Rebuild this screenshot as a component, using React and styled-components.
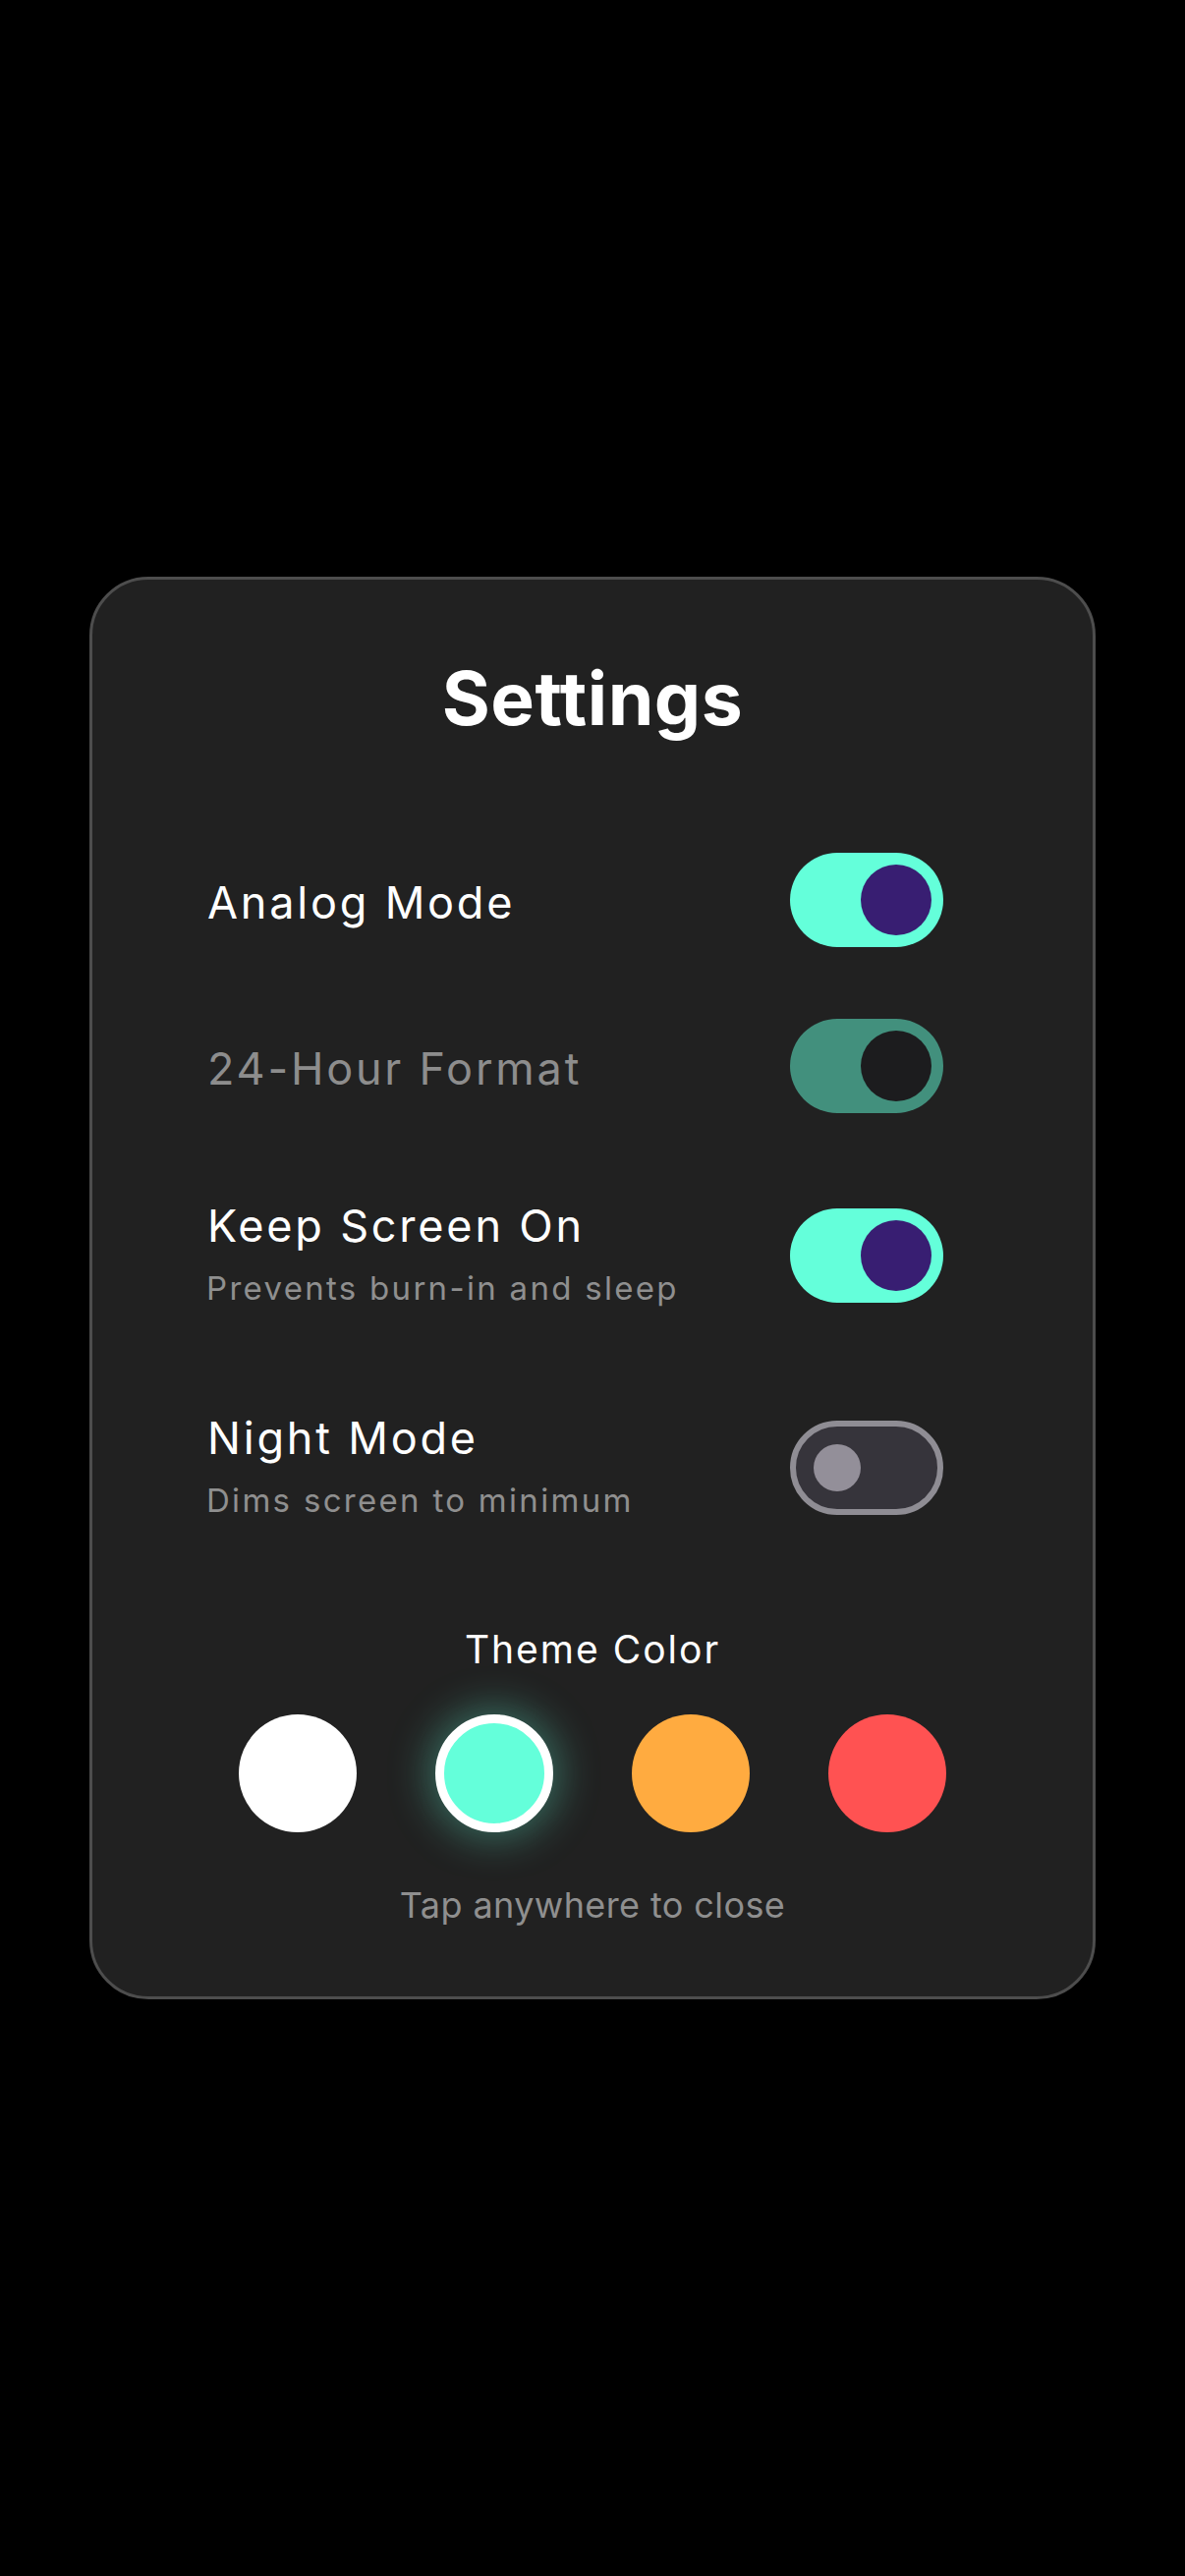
import React from "react";
import styled, { createGlobalStyle } from "styled-components";

const GlobalStyle = createGlobalStyle`
  html, body {
    margin: 0;
    padding: 0;
    background: #000000;
  }
  body {
    font-family: Inter, "Noto Sans", "Liberation Sans", sans-serif;
    -webkit-font-smoothing: antialiased;
  }
  * {
    box-sizing: border-box;
  }
`;

const Screen = styled.div`
  min-height: 2622px;
  display: flex;
  align-items: center;
  justify-content: center;
`;

const Card = styled.div`
  width: 1024px;
  background: #212121;
  border: 3px solid #4d4d4d;
  border-radius: 60px;
  padding: 76px 0 71px;
  display: flex;
  flex-direction: column;
  align-items: center;
`;

const Heading = styled.h1`
  margin: 0;
  font-size: 75px;
  line-height: 90px;
  font-weight: 700;
  color: #ffffff;
  letter-spacing: 0.5px;
`;

const List = styled.div`
  align-self: stretch;
  margin-top: 88px;
  padding: 0 152px 0 117px;
  display: flex;
  flex-direction: column;
  gap: 25px;
`;

const Row = styled.div`
  display: flex;
  align-items: center;
  justify-content: space-between;
  padding: 24px 0;
`;

const TextBlock = styled.div`
  display: flex;
  flex-direction: column;
  padding: ${(p) => (p.$single ? "6px 0 0" : "15px 0 18px")};
`;

const Label = styled.div`
  font-size: 45px;
  line-height: 54px;
  font-weight: 400;
  letter-spacing: 2.8px;
  color: ${(p) => (p.$dim ? "#8d8d8d" : "#ffffff")};
`;

const Hint = styled.div`
  margin-top: 16px;
  margin-left: -1px;
  font-size: 33px;
  line-height: 40px;
  letter-spacing: 2.3px;
  color: #8f8f8f;
`;

const Track = styled.div`
  position: relative;
  flex: none;
  width: 156px;
  height: 96px;
  border-radius: 48px;
  background: ${(p) =>
    p.$state === "on" ? "#64ffda" : p.$state === "disabled" ? "#42907d" : "#36343b"};
  border: ${(p) => (p.$state === "off" ? "6px solid #8f8d94" : "none")};
`;

const Knob = styled.div`
  position: absolute;
  top: 50%;
  border-radius: 50%;
  transform: translateY(-50%);
  ${(p) =>
    p.$state === "off"
      ? `
    width: 48px;
    height: 48px;
    left: 18px;
    background: #938f99;
  `
      : `
    width: 72px;
    height: 72px;
    right: 12px;
    background: ${p.$state === "on" ? "#381e72" : "#1c1c1e"};
  `}
`;

const SectionLabel = styled.div`
  margin-top: 66px;
  font-size: 39px;
  line-height: 48px;
  letter-spacing: 2px;
  color: #ffffff;
`;

const Swatches = styled.div`
  margin-top: 42px;
  display: flex;
  gap: 80px;
`;

const Swatch = styled.div`
  width: 120px;
  height: 120px;
  border-radius: 50%;
  background: ${(p) => p.$color};
  border: ${(p) => (p.$active ? "9px solid #ffffff" : "none")};
  box-shadow: ${(p) => (p.$active ? `0 0 42px 6px ${p.$color}59` : "none")};
`;

const Footer = styled.div`
  margin-top: 52px;
  font-size: 36px;
  line-height: 44px;
  letter-spacing: 0.4px;
  color: #8f8f8f;
`;

const Toggle = ({ state }) => (
  <Track $state={state}>
    <Knob $state={state} />
  </Track>
);

const settings = [
  { label: "Analog Mode", state: "on" },
  { label: "24-Hour Format", state: "disabled", dim: true },
  { label: "Keep Screen On", hint: "Prevents burn-in and sleep", state: "on" },
  { label: "Night Mode", hint: "Dims screen to minimum", state: "off" },
];

const colors = ["#ffffff", "#64ffda", "#ffab40", "#ff5252"];

export default function App() {
  return (
    <>
      <GlobalStyle />
      <Screen>
        <Card>
          <Heading>Settings</Heading>
          <List>
            {settings.map((s) => (
              <Row key={s.label}>
                <TextBlock $single={!s.hint}>
                  <Label $dim={s.dim}>{s.label}</Label>
                  {s.hint && <Hint>{s.hint}</Hint>}
                </TextBlock>
                <Toggle state={s.state} />
              </Row>
            ))}
          </List>
          <SectionLabel>Theme Color</SectionLabel>
          <Swatches>
            {colors.map((c) => (
              <Swatch key={c} $color={c} $active={c === "#64ffda"} />
            ))}
          </Swatches>
          <Footer>Tap anywhere to close</Footer>
        </Card>
      </Screen>
    </>
  );
}
